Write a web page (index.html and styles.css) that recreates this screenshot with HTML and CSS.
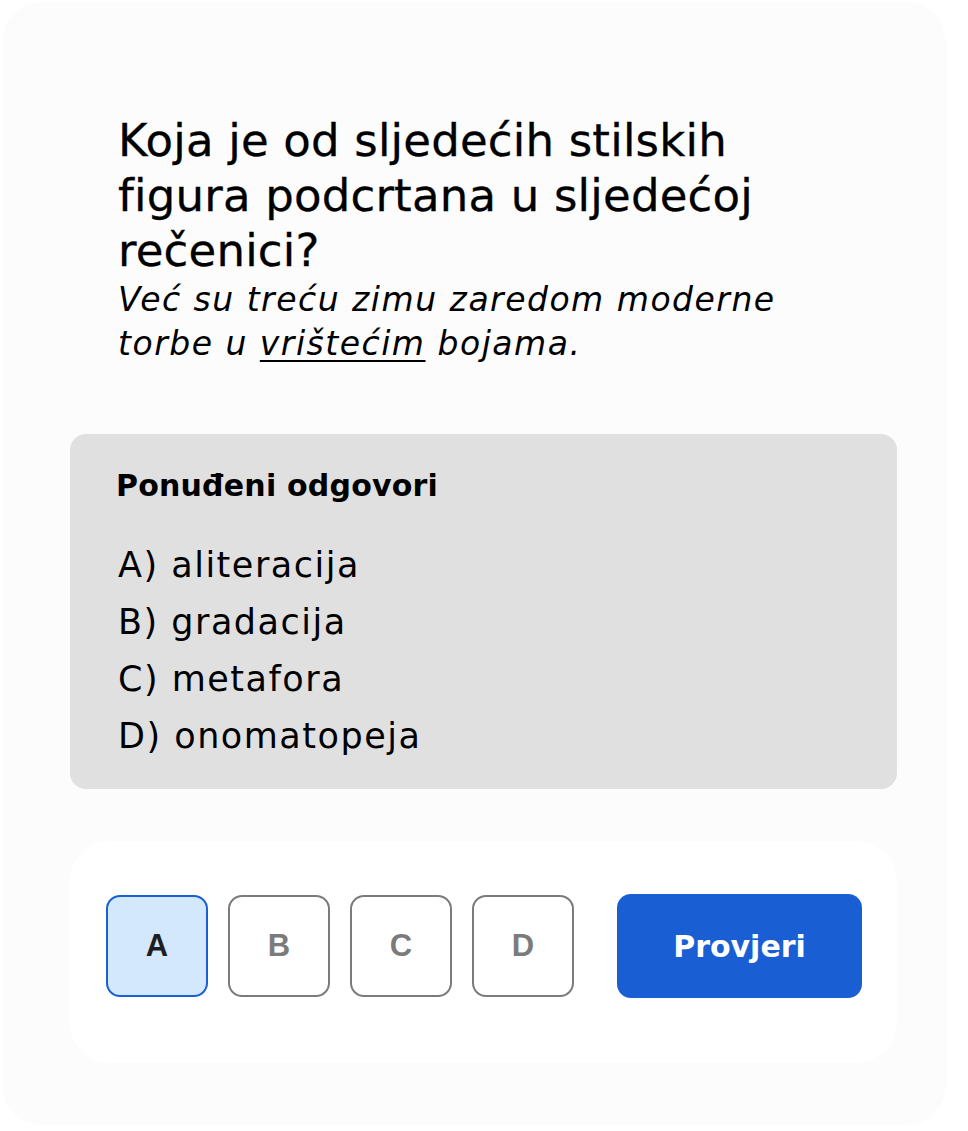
FILE: index.html
```html
<!DOCTYPE html>
<html lang="hr">
<head>
<meta charset="utf-8">
<title>Pitanje</title>
<link rel="stylesheet" href="styles.css">
</head>
<body>
<div class="page">
  <div class="question">
    <h1 class="title">Koja je od sljedećih stilskih figura podcrtana u sljedećoj rečenici?</h1>
    <p class="sentence"><span class="line">Već su treću zimu zaredom moderne</span> <span class="line">torbe u <u class="mark">vrištećim</u> bojama.</span></p>
  </div>
  <div class="answers">
    <h2 class="answers-title">Ponuđeni odgovori</h2>
    <ul class="answer-list">
      <li>A) aliteracija</li>
      <li>B) gradacija</li>
      <li>C) metafora</li>
      <li>D) onomatopeja</li>
    </ul>
  </div>
  <div class="panel">
    <div class="choices">
      <button class="choice selected">A</button>
      <button class="choice">B</button>
      <button class="choice">C</button>
      <button class="choice">D</button>
    </div>
    <button class="check">Provjeri</button>
  </div>
</div>
</body>
</html>
```
FILE: styles.css
```css
* { box-sizing: border-box; }
html, body { margin: 0; padding: 0; background: #ffffff; }
body {
  font-family: "DejaVu Sans", "Noto Sans", sans-serif;
  color: #000;
}
.page {
  margin: 2px;
  width: 944px;
  height: 1123px;
  background: #fcfcfc;
  border-radius: 40px;
  padding: 111px 0 0 68px;
}
.question {
  margin-left: 48px;
  width: 700px;
}
.title {
  margin: 0;
  font-size: 45px;
  font-weight: 400;
  line-height: 55px;
  letter-spacing: 0.2px;
  -webkit-text-stroke: 0.3px #000;
}
.sentence {
  margin: 0;
  font-size: 33px;
  font-style: italic;
  line-height: 44px;
  letter-spacing: 1.5px;
}
.line { display: block; }
.mark { text-underline-offset: 5px; text-decoration-thickness: 2px; }
.answers {
  margin-top: 68px;
  width: 827px;
  background: #e0e0e0;
  border-radius: 16px;
  padding: 32px 48px 24px 48px;
}
.answers-title {
  margin: 0 0 31px -2px;
  font-size: 30px;
  font-weight: 700;
  line-height: 40px;
  letter-spacing: 0.2px;
}
.answer-list {
  list-style: none;
  margin: 0;
  padding: 0;
}
.answer-list li {
  font-size: 35px;
  line-height: 57px;
  letter-spacing: 1.5px;
}
.panel {
  margin-top: 52px;
  width: 827px;
  height: 222px;
  background: #ffffff;
  border-radius: 40px;
  display: flex;
  align-items: flex-start;
  justify-content: space-between;
  padding: 53px 35px 0 36px;
}
.choices { display: flex; gap: 20px; margin-top: 1px; }
.choice {
  width: 102px;
  height: 102px;
  border: 2px solid #7b7b7b;
  border-radius: 14px;
  background: #ffffff;
  font-family: "Liberation Sans", Arial, sans-serif;
  font-weight: 700;
  font-size: 31px;
  color: #7b7b7b;
  padding: 0;
}
.choice.selected {
  background: #d3e7fd;
  border-color: #1a5fd4;
  color: #1e1e1e;
}
.check {
  width: 245px;
  height: 104px;
  border: none;
  border-radius: 14px;
  background: #1a5ed4;
  color: #fff;
  font-family: "DejaVu Sans", sans-serif;
  font-weight: 700;
  font-size: 30px;
  padding: 0;
}
```
